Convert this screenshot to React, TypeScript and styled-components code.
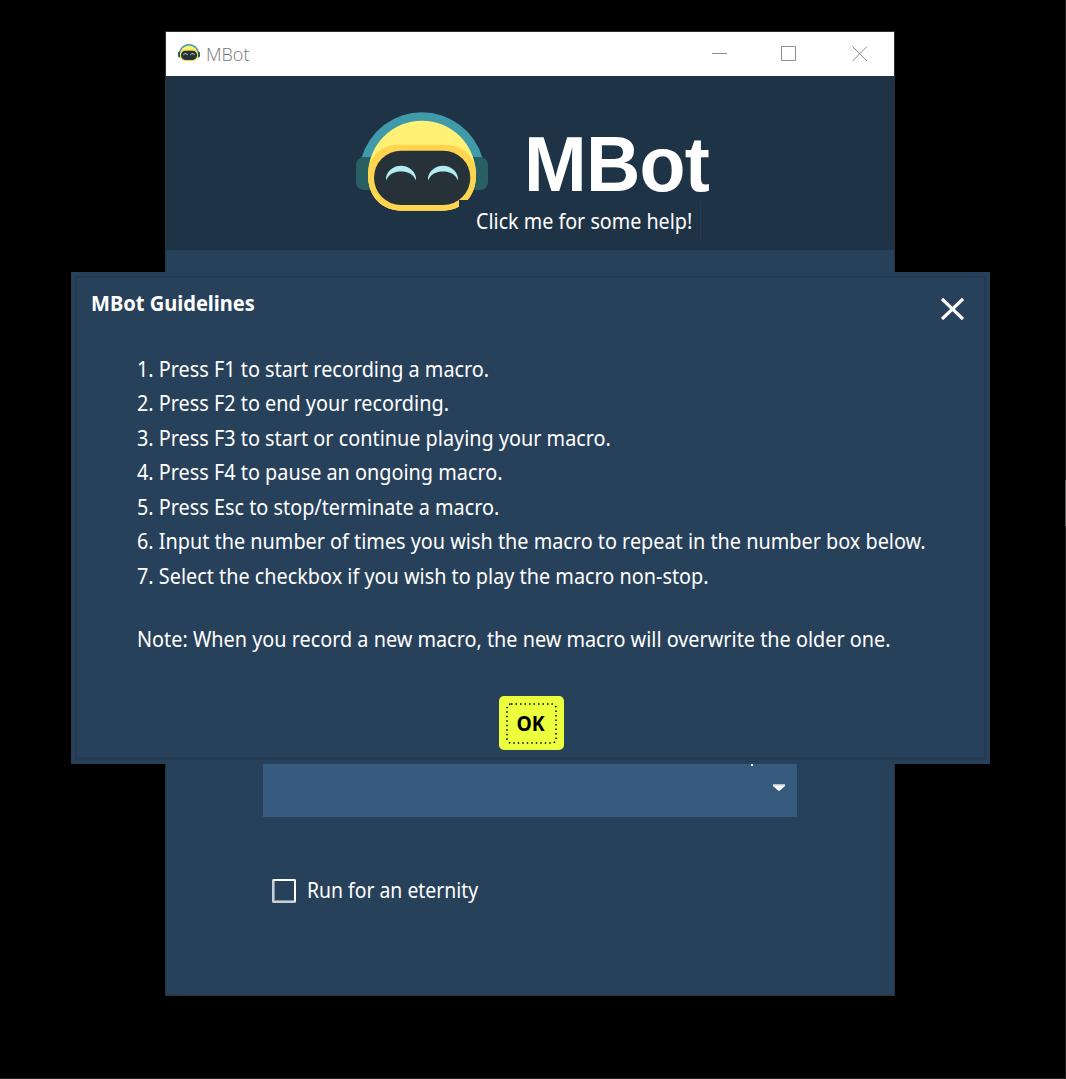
import React from "react";
import styled, { createGlobalStyle } from "styled-components";

const Global = createGlobalStyle`
  * { box-sizing: border-box; }
  html, body { margin: 0; background: #000; }
  body { font-family: "Noto Sans", "Open Sans", sans-serif; color: #fff; overflow: hidden; }
`;

const Desktop = styled.div`
  position: relative;
  width: 1066px;
  height: 1079px;
  padding: 31px 0 0 165px;
  background: #000;
`;

const EdgeHandle = styled.div`
  position: absolute;
  right: 0;
  top: 480px;
  width: 1px;
  height: 46px;
  background: #5c5c5c;
`;

const DesktopEdge = styled.div`
  position: absolute;
  inset: 0;
  border: 0 solid #202020;
  border-width: 0 1px 1px 0;
`;

const Window = styled.main`
  width: 730px;
  height: 965px;
  border: 1px solid #2b3036;
  background: #28415b;
  display: flex;
  flex-direction: column;
`;

const TitleBar = styled.header`
  flex: none;
  height: 44px;
  background: #fff;
  display: flex;
  align-items: center;
  padding-left: 12px;
  > svg { margin-bottom: 3px; }
`;

const AppName = styled.span`
  width: 50px;
  margin-left: 6px;
  font-family: "Open Sans", sans-serif;
  font-size: 18px;
  font-weight: 350;
  line-height: 24px;
  color: #757575;
  white-space: nowrap;
`;

const WindowControls = styled.div`
  margin-left: auto;
  padding-right: 26px;
  display: flex;
  align-items: center;
  gap: 53px;
  svg { display: block; }
  svg:last-child { margin-left: 2px; }
`;

const Banner = styled.section`
  flex: none;
  height: 174px;
  background: #1f3347;
  padding: 36px 0 0 190px;
`;

const Brand = styled.div`
  display: flex;
  height: 88px;
  svg { flex: none; display: block; }
`;

const Wordmark = styled.h1`
  height: 72px;
  margin: 16px 0 0 36px;
  font: bold 78px/72px "Liberation Sans", Arial, sans-serif;
  letter-spacing: -0.8px;
  transform: scaleX(0.965);
  transform-origin: left center;
`;

const HelpLink = styled.div`
  position: relative;
  width: 242px;
  height: 42px;
  margin-left: 103px;
  padding: 5px 0 0 17px;
  background: #1f3347;
  border-right: 1px solid #263b56;
  border-radius: 0 3px 3px 0;
`;

const Text = styled.span<{ $size?: number; $stretch?: number; $bold?: boolean }>`
  display: block;
  width: max-content;
  font-size: ${(p) => p.$size ?? 22}px;
  font-weight: ${(p) => (p.$bold ? 700 : 400)};
  line-height: 30px;
  white-space: nowrap;
  transform: scaleX(${(p) => p.$stretch ?? 0.9015});
  transform-origin: left center;
`;

const Controls = styled.section`
  flex: 1;
  display: flex;
  flex-direction: column;
  padding: 490px 97px 0;
`;

const RepeatBox = styled.div`
  position: relative;
  height: 77px;
  background: #375a7f;
  display: flex;
  align-items: flex-end;
  justify-content: flex-end;
  padding: 0 12px 25px;
`;

const Caret = styled.i`
  position: absolute;
  top: 24px;
  right: 44px;
  width: 2px;
  height: 2px;
  background: #fff;
`;

const CheckRow = styled.label`
  display: flex;
  align-items: center;
  gap: 11px;
  margin: 57px 0 0 9px;
`;

const CheckBox = styled.span`
  width: 24px;
  height: 24px;
  margin-top: 4px;
  border: 2px solid #fff;
  border-left-color: #c5cdd5;
  border-bottom-color: #c5cdd5;
  border-radius: 2px;
  box-shadow: inset 1px -1px 0 #8796a5;
`;

const Dialog = styled.section`
  position: absolute;
  left: 71px;
  top: 272px;
  width: 919px;
  height: 492px;
  padding: 4px;
  background: #28415b;
`;

const DialogFrame = styled.div`
  height: 100%;
  border: 2px solid #233a51;
  border-bottom-width: 3px;
  padding: 10px 20px 0 14px;
  display: flex;
  flex-direction: column;
`;

const DialogHeader = styled.div`
  display: flex;
  justify-content: space-between;
  height: 64.6px;
  svg { display: block; margin-top: 9px; }
`;

const Steps = styled.div`
  padding-left: 46px;
  display: flex;
  flex-direction: column;
  gap: 4.5px;
`;

const Note = styled.div`
  padding: 33.4px 0 0 46px;
`;

const OkButton = styled.button`
  margin: 43px auto 0 407.5px;
  width: 65px;
  height: 54px;
  padding: 0;
  border: 0;
  border-radius: 5px;
  background: #ecff3d;
  color: #000;
  font-family: inherit;
  display: grid;
  svg { grid-area: 1 / 1; display: block; }
`;

const OkLabel = styled.span`
  grid-area: 1 / 1;
  place-self: center;
  font-size: 21.33px;
  font-weight: 700;
  line-height: 30px;
  transform: scaleX(0.91);
`;

const Robot = ({ w, h }: { w: number; h: number }) => (
  <svg width={w} height={h} viewBox="16 12 132 99" preserveAspectRatio="none">
    <path d="M21.500 58A62.900 62.900 0 0 1 142.500 58L132 70H31z" fill="#419aaa" />
    <rect x="16" y="57" width="26" height="33" rx="8" fill="#285f63" />
    <rect x="122" y="57" width="26" height="33" rx="8" fill="#285f63" />
    <path d="M28 75A54 54.300 0 0 1 136 75C136 97 122 110.700 102 110.700H62C42 110.700 28 97 28 75z" fill="#fff176" />
    <path d="M28.800 66C33 53 44 44.700 58 44.700H106C120 44.700 131 53 135.200 66L136 75C136 97 122 110.700 102 110.700H62C42 110.700 28 97 28 75z" fill="#ffd54f" />
    <rect x="34" y="50.700" width="96.300" height="54.300" rx="27" fill="#263238" />
    <path d="M46 80.500C45 72 53 65.700 61 65.700S77 72 76 80.500C73 74 68 71.500 61 71.500S49 74 46 80.500z" fill="#b2ebf2" />
    <path d="M88 80.500C87 72 95 65.700 103 65.700S119 72 118 80.500C115 74 110 71.500 103 71.500S91 74 88 80.500z" fill="#b2ebf2" />
  </svg>
);

const steps = [
  "1. Press F1 to start recording a macro.",
  "2. Press F2 to end your recording.",
  "3. Press F3 to start or continue playing your macro.",
  "4. Press F4 to pause an ongoing macro.",
  "5. Press Esc to stop/terminate a macro.",
  "6. Input the number of times you wish the macro to repeat in the number box below.",
  "7. Select the checkbox if you wish to play the macro non-stop.",
];

export default function App() {
  return (
    <Desktop>
      <Global />
      <DesktopEdge />
      <EdgeHandle />
      <Window>
        <TitleBar>
          <Robot w={22} h={17} />
          <AppName>MBot</AppName>
          <WindowControls>
            <svg width="16" height="16" stroke="#8e8e8e"><path d="M0 7.500H15" /></svg>
            <svg width="16" height="16" stroke="#8e8e8e" fill="none"><path d="M.5 .5H14.500V14.500H.5z" /></svg>
            <svg width="16" height="16" stroke="#8e8e8e"><path d="M.5 .5L15 15M15 .5L.5 15" /></svg>
          </WindowControls>
        </TitleBar>
        <Banner>
          <Brand>
            <Robot w={132} h={99} />
            <Wordmark>MBot</Wordmark>
          </Brand>
          <HelpLink><Text $stretch={0.896}>Click me for some help!</Text></HelpLink>
        </Banner>
        <Controls>
          <RepeatBox>
            <Caret />
            <svg width="12" height="8"><path d="M0 0H12V2L8 5.500Q6 8 4 5.500L0 2z" fill="#fff" /><path d="M0 0H12V1.500H0z" fill="#b9c5d2" /></svg>
          </RepeatBox>
          <CheckRow>
            <CheckBox />
            <Text $stretch={0.881}>Run for an eternity</Text>
          </CheckRow>
        </Controls>
      </Window>
      <Dialog role="dialog">
        <DialogFrame>
          <DialogHeader>
            <Text $bold $size={21.33} $stretch={0.94}>MBot Guidelines</Text>
            <svg width="23" height="23" stroke="#fff" strokeWidth="3.200"><path d="M1 2L22 22M22 2L1 22" /></svg>
          </DialogHeader>
          <Steps>
            {steps.map((s) => <Text key={s}>{s}</Text>)}
          </Steps>
          <Note><Text>Note: When you record a new macro, the new macro will overwrite the older one.</Text></Note>
          <OkButton>
            <svg width="65" height="54"><rect x="8" y="8" width="49" height="39" rx="4" fill="none" stroke="#000" strokeWidth="1.500" strokeDasharray="1.500 3" /></svg>
            <OkLabel>OK</OkLabel>
          </OkButton>
        </DialogFrame>
      </Dialog>
    </Desktop>
  );
}
